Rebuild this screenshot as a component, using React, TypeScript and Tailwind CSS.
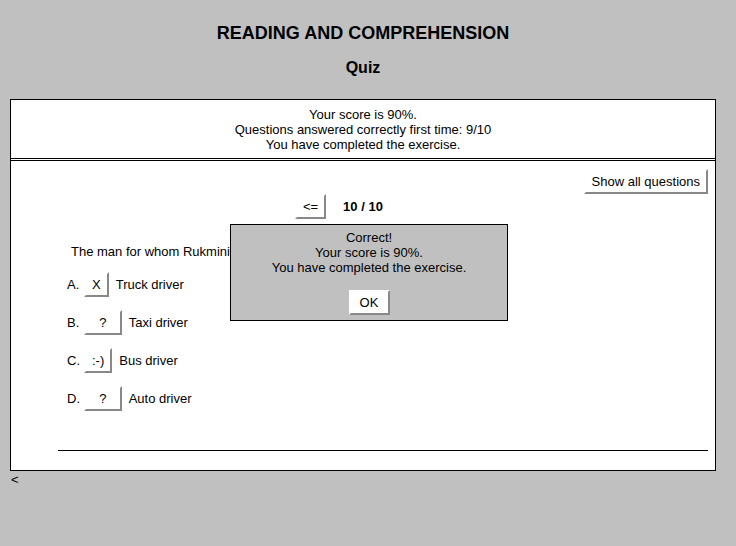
import React from "react";

// Hot Potatoes-style quiz page with the feedback box open.

const BTN =
  "inline-flex h-[25px] items-center justify-center border-2 border-t-white border-l-white border-r-[#888888] border-b-[#888888] bg-white px-[6px] text-[13px] leading-[15px] text-black";

const options = [
  { key: "A.", mark: "X", text: "Truck driver" },
  { key: "B.", mark: "\u00a0\u00a0?\u00a0\u00a0", text: "Taxi driver" },
  { key: "C.", mark: ":-)", text: "Bus driver" },
  { key: "D.", mark: "\u00a0\u00a0?\u00a0\u00a0", text: "Auto driver" },
];

export default function App() {
  return (
    <div
      className="relative min-h-[546px] bg-[#c0c0c0] text-[13px] leading-[15px] text-black"
      style={{ fontFamily: '"Liberation Sans", Arial, sans-serif' }}
    >
      <div className="ml-[10px] w-[706px]">
        {/* Headings */}
        <h1 className="pt-[23px] text-center text-[18px] font-bold leading-[21px]">
          READING AND COMPREHENSION
        </h1>
        <h2 className="mt-[15px] text-center text-[16px] font-bold leading-[18px]">Quiz</h2>

        {/* Boxes */}
        <div className="mt-[22px] flex flex-col gap-px border-x border-black bg-white">
          <div className="border-y border-black pt-[7px] pb-[6px] text-center">
            <div>Your score is 90%.</div>
            <div>Questions answered correctly first time: 9/10</div>
            <div>You have completed the exercise.</div>
          </div>

          <div className="border-y border-black px-[7px]">
            <div className="mt-[8px] flex justify-end">
              <button className={BTN}>Show all questions</button>
            </div>

            <div className="flex items-center justify-center gap-[17px]">
              <button className={BTN}>&lt;=</button>
              <span className="font-bold">10 / 10</span>
              <button className={`${BTN} invisible`}>=&gt;</button>
            </div>

            <p className="mt-[25px] pl-[53px]">The man for whom Rukmini works is a</p>

            <div className="mt-[13px] flex flex-col gap-[13px] pl-[49px]">
              {options.map((o) => (
                <div key={o.key} className="flex items-center">
                  <span className="w-[17px]">{o.key}</span>
                  <button className={`${BTN} whitespace-pre`}>{o.mark}</button>
                  <span className="ml-[7px]">{o.text}</span>
                </div>
              ))}
            </div>

            <div className="ml-[40px] mt-[39px] mb-[19px] h-px bg-black" />
          </div>
        </div>
      </div>

      <div className="mt-px pl-[11px]">&lt;</div>

      {/* Feedback dialog */}
      <div className="absolute left-[230px] top-[224px] flex h-[97px] w-[278px] flex-col items-center border border-black bg-[#c0c0c0] pt-[5px] text-center">
        <div>Correct!</div>
        <div>Your score is 90%.</div>
        <div>You have completed the exercise.</div>
        <button className={`${BTN} mt-[15px] h-[24px] w-[41px]`}>OK</button>
      </div>
    </div>
  );
}
